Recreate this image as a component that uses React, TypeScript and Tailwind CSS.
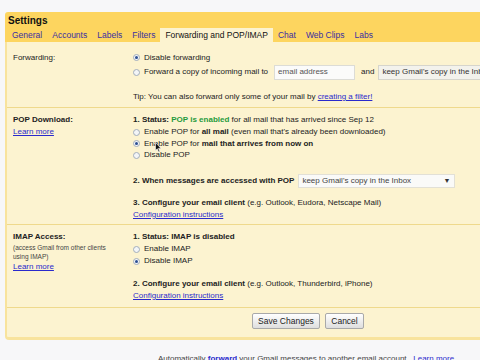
import React from "react";

function Radio({ on }: { on?: boolean }) {
  return (
    <span className="w-[7px] h-[7px] rounded-full border border-[#a3aebb] bg-[#f3f5f7] flex items-center justify-center shrink-0">
      {on && <span className="w-[3px] h-[3px] rounded-full bg-[#2c4f92]" />}
    </span>
  );
}

function Link({ children }: { children: React.ReactNode }) {
  return <span className="text-[#2a2acc] underline">{children}</span>;
}

const tabs = ["General", "Accounts", "Labels", "Filters"];
const tabsAfter = ["Chat", "Web Clips", "Labs"];

export default function App() {
  return (
    <div className="w-[480px] h-[360px] overflow-hidden bg-[#f7f7f9] font-['Liberation_Sans',Arial,sans-serif] text-[8px] text-[#222] relative">
      <div className="pt-[12px] pl-[5px]">
        {/* header */}
        <div className="bg-[#fdd55f] rounded-tl-[3px]">
          <div className="h-[16px] pl-[3px] pt-[3px] text-[10px] font-bold leading-[12px] text-[#111]">
            Settings
          </div>
          <div className="h-[14px] flex pl-[2px] text-[8.5px] leading-[14px]">
            {tabs.map((t) => (
              <span key={t} className="px-[5px] text-[#3a2fa2]">
                {t}
              </span>
            ))}
            <span className="px-[5px] bg-[#fcf3d0] text-[#111]">Forwarding and POP/IMAP</span>
            {tabsAfter.map((t) => (
              <span key={t} className="px-[5px] text-[#3a2fa2]">
                {t}
              </span>
            ))}
          </div>
        </div>

        {/* content */}
        <div className="bg-[#fcf3d0] border-l-[2px] border-b-[3px] border-[#f8e39d] rounded-bl-[4px] leading-[10px]">
          {/* Forwarding */}
          <div className="flex pt-[9px] pb-[4px] border-b border-[#efd98c]">
            <div className="w-[126px] pl-[6px] shrink-0">
              <div className="h-[13px] flex items-center">Forwarding:</div>
            </div>
            <div className="flex flex-col">
              <div className="h-[13px] flex items-center gap-[4px]">
                <Radio on />
                <span>Disable forwarding</span>
              </div>
              <div className="h-[16px] flex items-center gap-[4px] whitespace-nowrap">
                <Radio />
                <span>Forward a copy of incoming mail to</span>
                <span className="w-[81px] h-[15px] ml-[2px] bg-[#fbfbfa] border border-[#dcdcd6] flex items-center pl-[3px] text-[#555]">
                  email address
                </span>
                <span className="ml-[2px]">and</span>
                <span className="w-[120px] h-[15px] bg-[#f3f2ec] border border-[#d6d5cc] flex items-center pl-[3px] text-[#333]">
                  keep Gmail&apos;s copy in the Inbox
                </span>
              </div>
              <div className="h-[12px] mt-[11px] flex items-center whitespace-nowrap">
                Tip: You can also forward only some of your mail by&nbsp;<Link>creating a filter!</Link>
              </div>
            </div>
          </div>

          {/* POP */}
          <div className="flex pt-[6px] pb-[4px] border-b border-[#efd98c]">
            <div className="w-[126px] pl-[6px] shrink-0">
              <div className="h-[12px] flex items-center font-bold">POP Download:</div>
              <div className="h-[11px] flex items-center">
                <Link>Learn more</Link>
              </div>
            </div>
            <div className="flex flex-col whitespace-nowrap">
              <div className="h-[12px] flex items-center">
                <b>1. Status:&nbsp;</b>
                <b className="text-[#1f9a3c]">POP is enabled</b>
                &nbsp;for all mail that has arrived since Sep 12
              </div>
              <div className="h-[12px] flex items-center gap-[4px]">
                <Radio />
                <span>
                  Enable POP for <b>all mail</b> (even mail that&apos;s already been downloaded)
                </span>
              </div>
              <div className="h-[11px] flex items-center gap-[4px]">
                <Radio on />
                <span>
                  Enable POP for <b>mail that arrives from now on</b>
                </span>
              </div>
              <div className="h-[12px] flex items-center gap-[4px]">
                <Radio />
                <span>Disable POP</span>
              </div>
              <div className="h-[16px] mt-[12px] flex items-center">
                <b>2. When messages are accessed with POP</b>
                <span className="w-[157px] h-[14px] ml-[4px] bg-[#fafaf8] border border-[#e2e0d6] flex items-center justify-between pl-[3px] pr-[4px] text-[#444]">
                  keep Gmail&apos;s copy in the Inbox
                  <span className="text-[7px] text-[#333]">▼</span>
                </span>
              </div>
              <div className="h-[12px] mt-[8px] flex items-center">
                <b>3. Configure your email client</b>&nbsp;(e.g. Outlook, Eudora, Netscape Mail)
              </div>
              <div className="h-[11px] flex items-center">
                <Link>Configuration instructions</Link>
              </div>
            </div>
          </div>

          {/* IMAP */}
          <div className="flex pt-[6px] pb-[6px] border-b border-[#efd98c]">
            <div className="w-[126px] pl-[6px] shrink-0">
              <div className="h-[12px] flex items-center font-bold">IMAP Access:</div>
              <div className="h-[9px] flex items-center text-[6.5px] text-[#444]">(access Gmail from other clients</div>
              <div className="h-[9px] flex items-center text-[6.5px] text-[#444]">using IMAP)</div>
              <div className="h-[11px] flex items-center">
                <Link>Learn more</Link>
              </div>
            </div>
            <div className="flex flex-col whitespace-nowrap">
              <div className="h-[12px] flex items-center font-bold">1. Status: IMAP is disabled</div>
              <div className="h-[12px] flex items-center gap-[4px]">
                <Radio />
                <span>Enable IMAP</span>
              </div>
              <div className="h-[12px] flex items-center gap-[4px]">
                <Radio on />
                <span>Disable IMAP</span>
              </div>
              <div className="h-[12px] mt-[11px] flex items-center">
                <b>2. Configure your email client</b>&nbsp;(e.g. Outlook, Thunderbird, iPhone)
              </div>
              <div className="h-[11px] flex items-center">
                <Link>Configuration instructions</Link>
              </div>
            </div>
          </div>

          {/* buttons */}
          <div className="flex gap-[5px] pl-[245px] pt-[5px] pb-[8px] text-[8.5px]">
            <button className="w-[68px] h-[16px] rounded-[2px] border border-[#a9a9a9] bg-gradient-to-b from-white to-[#dedede] text-[#222]">
              Save Changes
            </button>
            <button className="w-[39px] h-[16px] rounded-[2px] border border-[#a9a9a9] bg-gradient-to-b from-white to-[#dedede] text-[#222]">
              Cancel
            </button>
          </div>
        </div>
      </div>

      <div className="mt-[14px] pl-[158px] whitespace-nowrap leading-[10px] text-[#444]">
        Automatically <b className="text-[#2a2acc]">forward</b> your Gmail messages to another email account.&nbsp;&nbsp;
        <span className="text-[#2a2acc]">Learn more</span>
      </div>

      {/* mouse pointer */}
      <svg className="absolute left-[155px] top-[142px]" width="7" height="11" viewBox="0 0 7 11">
        <path d="M0.5 0.5 L0.5 8.5 L2.3 6.8 L3.6 10 L4.8 9.5 L3.5 6.4 L6 6.4 Z" fill="#111" stroke="#fff" strokeWidth="0.6" />
      </svg>
    </div>
  );
}
